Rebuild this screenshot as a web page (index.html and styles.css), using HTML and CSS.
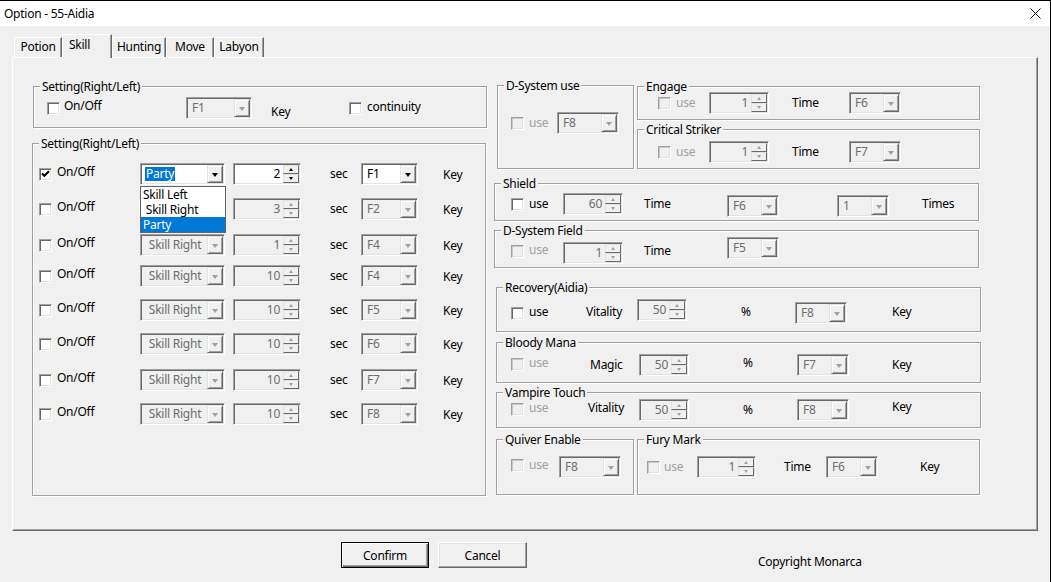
FILE: index.html
```html
<!DOCTYPE html>
<html lang="en">
<head>
    <meta charset="UTF-8">
    <title>Option - 55-Aidia</title>
    <link rel="stylesheet" href="styles.css">
</head>
<body>
<div class="window">
    <div class="titlebar">
        <span class="title">Option - 55-Aidia</span>
        <svg class="close" width="11" height="11" viewBox="0 0 11 11"><path d="M0.5 0.5L10.5 10.5M10.5 0.5L0.5 10.5" stroke="#000" stroke-width="1" fill="none"/></svg>
    </div>

    <div class="tabs">
        <div class="tab tab-potion">Potion</div>
        <div class="tab tab-skill active">Skill</div>
        <div class="tab tab-hunting">Hunting</div>
        <div class="tab tab-move">Move</div>
        <div class="tab tab-labyon">Labyon</div>
    </div>

    <div class="panel">
        <div class="col-left">
            <div class="group g-top">
                <span class="group-title">Setting(Right/Left)</span>
                <div class="row">
                    <span class="chk"></span>
                    <span class="lbl onoff">On/Off</span>
                    <div class="combo dis"><span class="combo-text">F1</span><span class="combo-btn"></span></div>
                    <span class="lbl key">Key</span>
                    <span class="chk"></span>
                    <span class="lbl cont">continuity</span>
                </div>
            </div>

            <div class="group g-skills">
                <span class="group-title">Setting(Right/Left)</span>
                <div class="row skill-row">
                    <span class="chk checked"><svg width="9" height="9" viewBox="0 0 9 9"><path d="M1 3.5L3.3 5.8L8 1.2" stroke="#000" stroke-width="2" fill="none"/></svg></span>
                    <span class="lbl onoff">On/Off</span>
                    <div class="combo skill">
                        <span class="combo-text"><span class="hl">Party</span></span><span class="combo-btn"></span>
                        <div class="dropdown">
                            <div>Skill Left</div>
                            <div>&nbsp;Skill Right</div>
                            <div class="sel">Party</div>
                        </div>
                    </div>
                    <div class="spin"><span class="spin-text">2</span><span class="spin-btns"><span class="up"></span><span class="down"></span></span></div>
                    <span class="lbl sec">sec</span>
                    <div class="combo fkey"><span class="combo-text">F1</span><span class="combo-btn"></span></div>
                    <span class="lbl key">Key</span>
                </div>
                <div class="row skill-row">
                    <span class="chk"></span>
                    <span class="lbl onoff">On/Off</span>
                    <!-- covered by the open list above -->
                    <div class="combo skill dis"><span class="combo-text"></span><span class="combo-btn"></span></div>
                    <div class="spin dis"><span class="spin-text">3</span><span class="spin-btns"><span class="up"></span><span class="down"></span></span></div>
                    <span class="lbl sec">sec</span>
                    <div class="combo fkey dis"><span class="combo-text">F2</span><span class="combo-btn"></span></div>
                    <span class="lbl key">Key</span>
                </div>
                <div class="row skill-row">
                    <span class="chk"></span>
                    <span class="lbl onoff">On/Off</span>
                    <div class="combo skill dis"><span class="combo-text">&nbsp;Skill Right</span><span class="combo-btn"></span></div>
                    <div class="spin dis"><span class="spin-text">1</span><span class="spin-btns"><span class="up"></span><span class="down"></span></span></div>
                    <span class="lbl sec">sec</span>
                    <div class="combo fkey dis"><span class="combo-text">F4</span><span class="combo-btn"></span></div>
                    <span class="lbl key">Key</span>
                </div>
                <div class="row skill-row">
                    <span class="chk"></span>
                    <span class="lbl onoff">On/Off</span>
                    <div class="combo skill dis"><span class="combo-text">&nbsp;Skill Right</span><span class="combo-btn"></span></div>
                    <div class="spin dis"><span class="spin-text">10</span><span class="spin-btns"><span class="up"></span><span class="down"></span></span></div>
                    <span class="lbl sec">sec</span>
                    <div class="combo fkey dis"><span class="combo-text">F4</span><span class="combo-btn"></span></div>
                    <span class="lbl key">Key</span>
                </div>
                <div class="row skill-row">
                    <span class="chk"></span>
                    <span class="lbl onoff">On/Off</span>
                    <div class="combo skill dis"><span class="combo-text">&nbsp;Skill Right</span><span class="combo-btn"></span></div>
                    <div class="spin dis"><span class="spin-text">10</span><span class="spin-btns"><span class="up"></span><span class="down"></span></span></div>
                    <span class="lbl sec">sec</span>
                    <div class="combo fkey dis"><span class="combo-text">F5</span><span class="combo-btn"></span></div>
                    <span class="lbl key">Key</span>
                </div>
                <div class="row skill-row">
                    <span class="chk"></span>
                    <span class="lbl onoff">On/Off</span>
                    <div class="combo skill dis"><span class="combo-text">&nbsp;Skill Right</span><span class="combo-btn"></span></div>
                    <div class="spin dis"><span class="spin-text">10</span><span class="spin-btns"><span class="up"></span><span class="down"></span></span></div>
                    <span class="lbl sec">sec</span>
                    <div class="combo fkey dis"><span class="combo-text">F6</span><span class="combo-btn"></span></div>
                    <span class="lbl key">Key</span>
                </div>
                <div class="row skill-row">
                    <span class="chk"></span>
                    <span class="lbl onoff">On/Off</span>
                    <div class="combo skill dis"><span class="combo-text">&nbsp;Skill Right</span><span class="combo-btn"></span></div>
                    <div class="spin dis"><span class="spin-text">10</span><span class="spin-btns"><span class="up"></span><span class="down"></span></span></div>
                    <span class="lbl sec">sec</span>
                    <div class="combo fkey dis"><span class="combo-text">F7</span><span class="combo-btn"></span></div>
                    <span class="lbl key">Key</span>
                </div>
                <div class="row skill-row">
                    <span class="chk"></span>
                    <span class="lbl onoff">On/Off</span>
                    <div class="combo skill dis"><span class="combo-text">&nbsp;Skill Right</span><span class="combo-btn"></span></div>
                    <div class="spin dis"><span class="spin-text">10</span><span class="spin-btns"><span class="up"></span><span class="down"></span></span></div>
                    <span class="lbl sec">sec</span>
                    <div class="combo fkey dis"><span class="combo-text">F8</span><span class="combo-btn"></span></div>
                    <span class="lbl key">Key</span>
                </div>
            </div>
        </div>

        <div class="col-right">
            <div class="r-top">
                <div class="group g-dsys">
                    <span class="group-title">D-System use</span>
                    <div class="row">
                        <span class="chk dis"></span>
                        <span class="lbl use dis">use</span>
                        <div class="combo dis"><span class="combo-text">F8</span><span class="combo-btn"></span></div>
                    </div>
                </div>
                <div class="stack">
                    <div class="group g-timed g-engage">
                        <span class="group-title">Engage</span>
                        <div class="row">
                            <span class="chk dis"></span>
                            <span class="lbl use dis">use</span>
                            <div class="spin dis"><span class="spin-text">1</span><span class="spin-btns"><span class="up"></span><span class="down"></span></span></div>
                            <span class="lbl time">Time</span>
                            <div class="combo dis"><span class="combo-text">F6</span><span class="combo-btn"></span></div>
                        </div>
                    </div>
                    <div class="group g-timed g-critical">
                        <span class="group-title">Critical Striker</span>
                        <div class="row">
                            <span class="chk dis"></span>
                            <span class="lbl use dis">use</span>
                            <div class="spin dis"><span class="spin-text">1</span><span class="spin-btns"><span class="up"></span><span class="down"></span></span></div>
                            <span class="lbl time">Time</span>
                            <div class="combo dis"><span class="combo-text">F7</span><span class="combo-btn"></span></div>
                        </div>
                    </div>
                </div>
            </div>

            <div class="group g-wide g-shield">
                <span class="group-title">Shield</span>
                <div class="row">
                    <span class="chk"></span>
                    <span class="lbl use">use</span>
                    <div class="spin dis"><span class="spin-text">60</span><span class="spin-btns"><span class="up"></span><span class="down"></span></span></div>
                    <span class="lbl time">Time</span>
                    <div class="combo dis"><span class="combo-text">F6</span><span class="combo-btn"></span></div>
                    <div class="combo count dis"><span class="combo-text">1</span><span class="combo-btn"></span></div>
                    <span class="lbl times">Times</span>
                </div>
            </div>

            <div class="group g-wide g-field">
                <span class="group-title">D-System Field</span>
                <div class="row">
                    <span class="chk dis"></span>
                    <span class="lbl use dis">use</span>
                    <div class="spin dis"><span class="spin-text">1</span><span class="spin-btns"><span class="up"></span><span class="down"></span></span></div>
                    <span class="lbl time">Time</span>
                    <div class="combo dis"><span class="combo-text">F5</span><span class="combo-btn"></span></div>
                </div>
            </div>

            <div class="group g-pct g-recovery">
                <span class="group-title">Recovery(Aidia)</span>
                <div class="row">
                    <span class="chk"></span>
                    <span class="lbl use">use</span>
                    <span class="lbl stat">Vitality</span>
                    <div class="spin dis"><span class="spin-text">50</span><span class="spin-btns"><span class="up"></span><span class="down"></span></span></div>
                    <span class="lbl pct">%</span>
                    <div class="combo dis"><span class="combo-text">F8</span><span class="combo-btn"></span></div>
                    <span class="lbl key">Key</span>
                </div>
            </div>

            <div class="group g-pct g-bloody">
                <span class="group-title">Bloody Mana</span>
                <div class="row">
                    <span class="chk dis"></span>
                    <span class="lbl use dis">use</span>
                    <span class="lbl stat">Magic</span>
                    <div class="spin dis"><span class="spin-text">50</span><span class="spin-btns"><span class="up"></span><span class="down"></span></span></div>
                    <span class="lbl pct">%</span>
                    <div class="combo dis"><span class="combo-text">F7</span><span class="combo-btn"></span></div>
                    <span class="lbl key">Key</span>
                </div>
            </div>

            <div class="group g-pct g-vampire">
                <span class="group-title">Vampire Touch</span>
                <div class="row">
                    <span class="chk dis"></span>
                    <span class="lbl use dis">use</span>
                    <span class="lbl stat">Vitality</span>
                    <div class="spin dis"><span class="spin-text">50</span><span class="spin-btns"><span class="up"></span><span class="down"></span></span></div>
                    <span class="lbl pct">%</span>
                    <div class="combo dis"><span class="combo-text">F8</span><span class="combo-btn"></span></div>
                    <span class="lbl key">Key</span>
                </div>
            </div>

            <div class="r-bottom">
                <div class="group g-quiver">
                    <span class="group-title">Quiver Enable</span>
                    <div class="row">
                        <span class="chk dis"></span>
                        <span class="lbl use dis">use</span>
                        <div class="combo dis"><span class="combo-text">F8</span><span class="combo-btn"></span></div>
                    </div>
                </div>
                <div class="group g-fury">
                    <span class="group-title">Fury Mark</span>
                    <div class="row">
                        <span class="chk dis"></span>
                        <span class="lbl use dis">use</span>
                        <div class="spin dis"><span class="spin-text">1</span><span class="spin-btns"><span class="up"></span><span class="down"></span></span></div>
                        <span class="lbl time">Time</span>
                        <div class="combo dis"><span class="combo-text">F6</span><span class="combo-btn"></span></div>
                        <span class="lbl key">Key</span>
                    </div>
                </div>
            </div>
        </div>
    </div>

    <div class="buttons">
        <button class="btn btn-default">Confirm</button>
        <button class="btn btn-cancel">Cancel</button>
        <span class="copyright">Copyright Monarca</span>
    </div>
</div>
</body>
</html>
```

FILE: styles.css
```css
:root{
    --face:#f0f0f0;
    --shadow:#a0a0a0;
    --dark:#696969;
    --light:#e3e3e3;
    --gray-text:#6d6d6d;
    --dim-text:#a0a0a0;
    --select:#0078d7;
}
*{
    box-sizing: border-box;
}
body{
    margin: 0;
    background: var(--face);
    font-family: "Noto Sans", "Open Sans", sans-serif;
    font-size: 12px;
    letter-spacing: -0.25px;
    color: #000;
}
.window{
    width: 1051px;
    height: 582px;
    border-top: 1px solid #000;
    border-right: 1px solid #000;
    overflow: hidden;
}
.titlebar{
    height: 25px;
    background: #fff;
    display: flex;
    align-items: center;
    justify-content: space-between;
    padding: 0 9px 0 4px;
}
.close{
    display: block;
}

/* tabs */
.tabs{
    display: flex;
    align-items: flex-end;
    height: 24px;
    margin: 8px 0 -1px;
    padding-left: 14px;
    position: relative;
    z-index: 1;
}
.tab{
    height: 20px;
    margin-bottom: 1px;
    line-height: 18px;
    text-align: center;
    background: var(--face);
    border-top: 1px solid #fff;
    border-left: 1px solid #fff;
    border-right: 1px solid var(--dark);
    box-shadow: inset -1px 0 var(--shadow);
}
.tab.active{
    height: 24px;
    margin-bottom: 0;
    line-height: 19px;
    text-align: left;
    padding-left: 6px;
}
.tab-potion{ width: 48px; }
.tab-skill{ width: 50px; }
.tab-hunting{ width: 54px; }
.tab-move{ width: 48px; }
.tab-labyon{ width: 50px; }

.panel{
    display: flex;
    align-items: flex-start;
    margin-left: 12px;
    width: 1026px;
    height: 474px;
    padding-top: 27px;
    border-top: 1px solid #fff;
    border-left: 1px solid #fff;
    border-right: 1px solid var(--dark);
    border-bottom: 1px solid var(--dark);
    box-shadow: inset -1px -1px var(--shadow);
}

/* group boxes */
.group{
    position: relative;
    flex: none;
    border: 1px solid var(--shadow);
    box-shadow: inset 1px 1px #fff, 1px 1px #fff;
}
.group-title{
    position: absolute;
    top: -8px;
    left: 6px;
    padding: 0 2px;
    line-height: 15px;
    background: var(--face);
    white-space: nowrap;
}
.row{
    display: flex;
    align-items: flex-start;
    height: 22px;
}

/* controls */
.chk{
    flex: none;
    width: 13px;
    height: 13px;
    margin-top: 5px;
    background: #fff;
    border: 1px solid;
    border-color: var(--shadow) #fff #fff var(--shadow);
    box-shadow: inset 1px 1px var(--dark), inset -1px -1px var(--light);
    display: flex;
    align-items: center;
    justify-content: center;
}
.chk svg{
    display: block;
}
.chk.dis{
    background: var(--face);
    box-shadow: inset 1px 1px #c8c8c8, inset -1px -1px var(--light);
}
.lbl{
    flex: none;
    line-height: 22px;
    white-space: nowrap;
}
.lbl.dis{
    color: var(--dim-text);
}
.chk + .lbl{
    margin-left: 5px;
}
.combo,
.spin{
    flex: none;
    display: flex;
    height: 22px;
    padding: 1px;
    background: #fff;
    border: 1px solid;
    border-color: var(--shadow) #fff #fff var(--shadow);
    box-shadow: inset 1px 1px var(--dark), inset -1px -1px var(--light);
}
.combo{
    position: relative;
}
.combo.dis,
.spin.dis{
    background: var(--face);
    color: var(--gray-text);
}
.combo-text{
    flex: 1;
    padding-left: 4px;
    line-height: 18px;
    white-space: nowrap;
    overflow: hidden;
}
.combo-btn{
    flex: none;
    width: 16px;
    height: 18px;
    display: flex;
    align-items: center;
    justify-content: center;
    background: var(--face);
    border: 1px solid;
    border-color: var(--light) var(--dark) var(--dark) var(--light);
    box-shadow: inset 1px 1px #fff, inset -1px -1px var(--shadow);
}
.combo-btn::after{
    content: "";
    border-left: 3.5px solid transparent;
    border-right: 3.5px solid transparent;
    border-top: 4px solid #000;
    margin-top: 1px;
}
.combo.dis .combo-btn::after{
    border-top-color: var(--shadow);
}
.hl{
    display: inline-block;
    line-height: 14px;
    padding: 0 1px;
    margin-left: -1px;
    background: var(--select);
    color: #fff;
}
.dropdown{
    position: absolute;
    top: 22px;
    left: -1px;
    width: 86px;
    z-index: 2;
    background: #fff;
    color: #000;
    border: 1px solid #646464;
}
.dropdown div{
    height: 15px;
    line-height: 15px;
    padding-left: 2px;
    white-space: nowrap;
}
.dropdown .sel{
    background: var(--select);
    color: #fff;
}
.spin-text{
    flex: 1;
    text-align: right;
    padding-right: 3px;
    line-height: 18px;
}
.spin-btns{
    flex: none;
    width: 16px;
    display: flex;
    flex-direction: column;
}
.spin-btns span{
    height: 9px;
    display: flex;
    align-items: center;
    justify-content: center;
    background: var(--face);
    border: 1px solid;
    border-color: var(--light) var(--dark) var(--dark) var(--light);
}
.spin-btns .up::after,
.spin-btns .down::after{
    content: "";
    border-left: 2.5px solid transparent;
    border-right: 2.5px solid transparent;
}
.spin-btns .up::after{
    border-bottom: 3px solid #000;
}
.spin-btns .down::after{
    border-top: 3px solid #000;
}
.spin.dis .up::after{
    border-bottom-color: var(--shadow);
}
.spin.dis .down::after{
    border-top-color: var(--shadow);
}

/* left column */
.col-left{
    flex: none;
    width: 455px;
    margin: 1px 0 0 19px;
}
.g-top{
    width: 454px;
    height: 42px;
    margin-left: 1px;
    padding: 10px 0 0 13px;
}
.g-top .onoff{
    width: 122px;
    margin-left: 4px;
    margin-top: -2px;
}
.g-top .combo{
    width: 66px;
}
.g-top .key{
    width: 78px;
    margin-left: 19px;
    margin-top: 4px;
}
.g-top .cont{
    margin-top: -1px;
}
.g-skills{
    width: 454px;
    height: 353px;
    margin-top: 15px;
    padding: 19px 0 0 6px;
}
.skill-row .onoff{
    width: 83px;
    margin-top: -2px;
}
.skill-row .skill{
    width: 85px;
}
.skill-row .spin{
    width: 68px;
    margin-left: 8px;
}
.skill-row .sec{
    width: 31px;
    margin-left: 29px;
}
.skill-row .fkey{
    width: 57px;
}
.skill-row .key{
    margin-left: 25px;
    margin-top: 1px;
}
.skill-row:nth-child(3){ margin-top: 13px; }
.skill-row:nth-child(4){ margin-top: 14px; }
.skill-row:nth-child(5){ margin-top: 9px; }
.skill-row:nth-child(6){ margin-top: 12px; }
.skill-row:nth-child(7){ margin-top: 12px; }
.skill-row:nth-child(8){ margin-top: 14px; }
.skill-row:nth-child(9){ margin-top: 12px; }

/* right column */
.col-right{
    flex: none;
    width: 487px;
    margin-left: 7px;
}
.r-top{
    display: flex;
    height: 84px;
}
.g-dsys{
    width: 137px;
    height: 84px;
    margin-left: 3px;
    padding: 26px 0 0 13px;
}
.g-dsys .use{
    width: 28px;
}
.g-dsys .combo{
    width: 62px;
}
.stack{
    width: 343px;
    margin-left: 3px;
}
.g-timed{
    width: 343px;
    padding-left: 20px;
}
.g-engage{
    height: 34px;
    margin-top: 1px;
    padding-top: 5px;
}
.g-critical{
    height: 40px;
    margin-top: 9px;
    padding-top: 11px;
}
.g-timed .use{
    width: 33px;
}
.g-timed .spin{
    width: 60px;
}
.g-timed .time{
    width: 57px;
    margin-left: 23px;
}
.g-timed .combo{
    width: 52px;
}

.g-wide{
    width: 485px;
    height: 38px;
    padding-left: 16px;
}
.g-wide .use{
    width: 34px;
}
.g-wide .spin{
    width: 60px;
}
.g-wide .time{
    width: 83px;
    margin-left: 21px;
}
.g-wide .combo{
    width: 52px;
}
.g-shield{
    margin-top: 14px;
    padding-top: 9px;
}
.g-shield .combo{
    margin-top: 2px;
}
.g-shield .count{
    margin-left: 58px;
}
.g-shield .times{
    margin-left: 33px;
}
.g-field{
    margin-top: 9px;
    padding-top: 6px;
}
.g-field .chk{
    margin-top: 8px;
}
.g-field .use{
    margin-top: 2px;
}
.g-field .spin{
    margin-top: 5px;
}
.g-field .time{
    margin-top: 3px;
}

.g-pct{
    width: 485px;
    margin-left: 2px;
    padding-left: 14px;
}
.g-pct .spin{
    width: 50px;
}
.g-pct .pct{
    width: 54px;
    margin-left: 54px;
}
.g-pct .combo{
    width: 52px;
}
.g-pct .key{
    margin-left: 43px;
}
.g-recovery{
    height: 45px;
    margin-top: 19px;
    padding-top: 11px;
}
.g-recovery .chk{
    margin-top: 8px;
}
.g-recovery .lbl{
    margin-top: 2px;
}
.g-recovery .use{
    width: 57px;
}
.g-recovery .stat{
    width: 51px;
}
.g-recovery .combo{
    margin-top: 3px;
}
.g-recovery .key{
    margin-left: 45px;
}
.g-bloody{
    height: 41px;
    margin-top: 10px;
    padding-top: 11px;
}
.g-bloody .chk{
    margin-top: 4px;
}
.g-bloody .use{
    width: 61px;
    margin-top: -2px;
}
.g-bloody .stat{
    width: 49px;
}
.g-bloody .pct{
    margin-top: -2px;
}
.g-vampire{
    height: 36px;
    margin-top: 9px;
    padding-top: 6px;
}
.g-vampire .chk{
    margin-top: 4px;
}
.g-vampire .use{
    width: 59px;
    margin-top: -2px;
}
.g-vampire .stat{
    width: 51px;
    margin-top: -2px;
}
.g-vampire .key{
    margin-top: -3px;
}

.r-bottom{
    display: flex;
    height: 56px;
    margin-top: 11px;
}
.g-quiver{
    width: 138px;
    height: 56px;
    margin-left: 2px;
    padding: 16px 0 0 14px;
}
.g-quiver .chk{
    margin-top: 3px;
}
.g-quiver .use{
    width: 30px;
    margin-top: -2px;
}
.g-quiver .combo{
    width: 62px;
}
.g-fury{
    width: 343px;
    height: 56px;
    margin-left: 3px;
    padding: 16px 0 0 9px;
}
.g-fury .use{
    width: 33px;
    margin-left: 4px;
}
.g-fury .spin{
    width: 59px;
}
.g-fury .time{
    width: 42px;
    margin-left: 28px;
}
.g-fury .combo{
    width: 52px;
}
.g-fury .key{
    margin-left: 42px;
}

/* bottom buttons */
.buttons{
    display: flex;
    align-items: flex-start;
    margin-top: 11px;
    padding-left: 341px;
}
.btn{
    width: 88px;
    height: 26px;
    padding: 0;
    font-family: inherit;
    font-size: 12px;
    letter-spacing: inherit;
    color: #000;
    background: var(--face);
    border: 1px solid;
    border-color: #fff var(--dark) var(--dark) #fff;
    box-shadow: inset -1px -1px var(--shadow), inset 1px 1px var(--light);
}
.btn-default{
    border-color: #000;
    box-shadow: inset 1px 1px #fff, inset -1px -1px var(--dark), inset -2px -2px var(--shadow);
}
.btn-cancel{
    width: 89px;
    margin-left: 9px;
}
.copyright{
    margin: 12px 0 0 231px;
    line-height: 15px;
}
```
